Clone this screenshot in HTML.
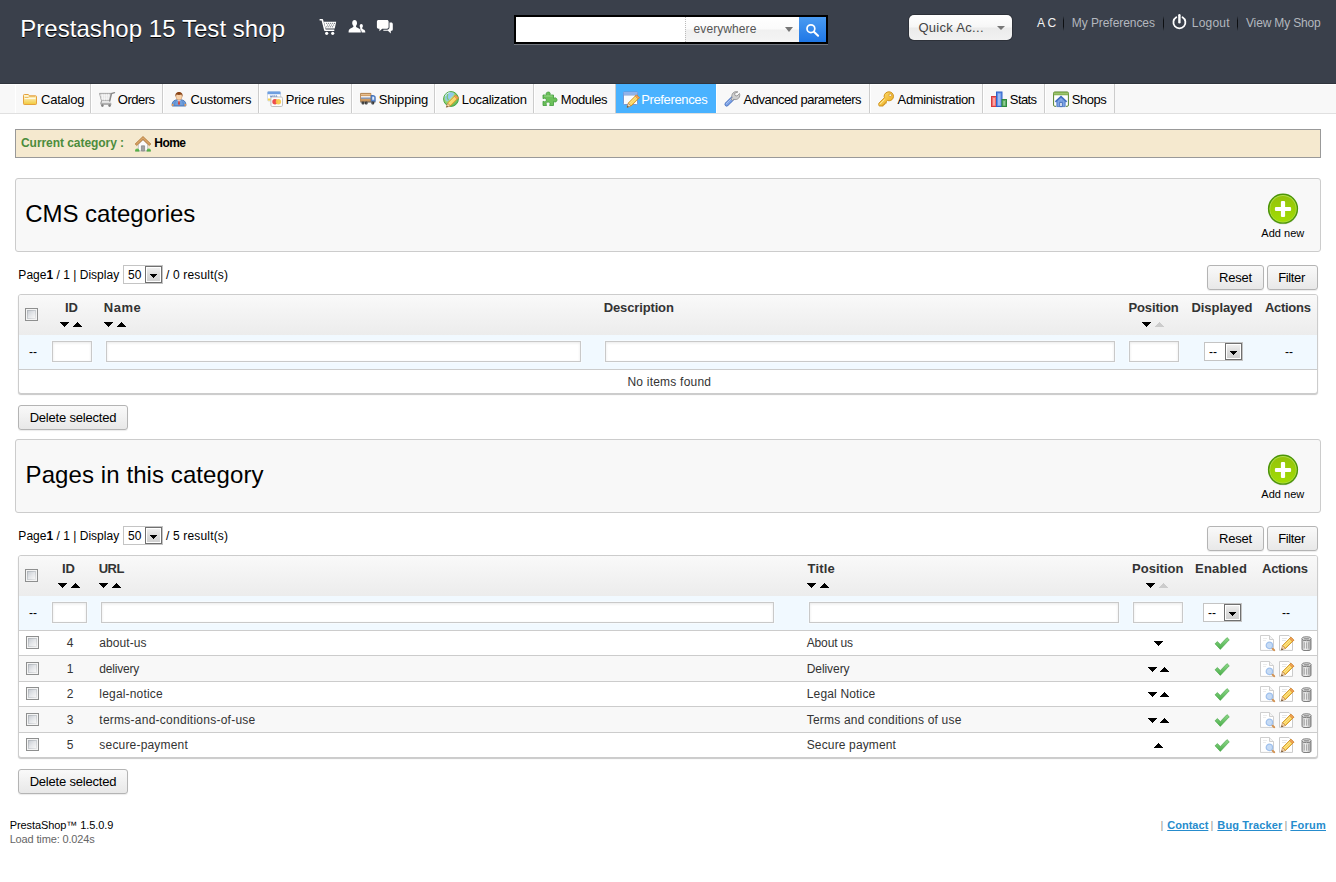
<!DOCTYPE html>
<html><head><meta charset="utf-8"><title>Preferences</title>
<style>
*{box-sizing:border-box;margin:0;padding:0}
html,body{width:1336px;height:882px;overflow:hidden;background:#fff}
body{font-family:"Liberation Sans",sans-serif;font-size:12px;color:#000;position:relative}
.abs{position:absolute}
#hdr{position:absolute;left:0;top:0;width:1336px;height:84px;background:#3a404b;border-bottom:1px solid #2f343c}
#shop{position:absolute;left:20px;top:15px;font-size:24px;line-height:28px;color:#fff;text-shadow:0 1px 0 #000;white-space:nowrap}
#nav{position:absolute;left:0;top:84px;width:1336px;height:30px;background:#f8f8f8;border-top:1px solid #fff;border-bottom:1px solid #e0e0e0}
#nav ul{position:absolute;left:15px;top:-1px;list-style:none;white-space:nowrap;height:29px;font-size:0}
#nav li{display:inline-block;vertical-align:top;height:29px;border-left:1px solid #fff;border-right:1px solid #ccc;padding:0 5px 0 7px;font-size:13px;line-height:29px;color:#000;position:relative}
#nav li svg{display:inline-block;vertical-align:top;margin:7px 2px 0 0;width:16px;height:16px;overflow:visible}
#nav li span{display:inline-block;vertical-align:top;height:29px;line-height:31px}
#nav li.act{background:#49b2ff;border-left-color:#49b2ff;border-right-color:#49b2ff;color:#fff}
.hl{position:absolute;top:16px;font-size:12px;line-height:14px;color:#b3b7be;white-space:nowrap}
.sep{position:absolute;top:16px;width:1px;height:15px;background:linear-gradient(rgba(0,0,0,0),#0d0f12 30%,#0d0f12 70%,rgba(0,0,0,0))}
#crumb{position:absolute;left:15px;top:129px;width:1306px;height:29px;background:#f5e9cf;border:1px solid #999}
#crumb b.g{position:absolute;left:5px;top:6px;font-size:12px;line-height:14px;color:#4c8c3c}
#crumb b.h{position:absolute;left:138px;top:6px;font-size:12px;line-height:14px;color:#000}
.tbox{position:absolute;left:15px;width:1306px;height:74px;background:#f8f8f8;border:1px solid #ccc;border-radius:3px}
.tbox h3{position:absolute;left:10px;top:21px;font-size:24px;line-height:28px;font-weight:normal;color:#000;white-space:nowrap}
.addc{position:absolute;left:1252px;top:15px;width:30px;height:30px}
.addt{position:absolute;left:1232px;top:48px;width:70px;text-align:center;font-size:11px;line-height:13px;color:#000}
.pag{position:absolute;left:18px;font-size:12px;line-height:14px;color:#000;white-space:nowrap}
.sel{position:absolute;height:19px;border:1px solid #c4c4c4;background:#fff;font-size:12px;line-height:19px;color:#000}
.sel i{position:absolute;right:0;top:0;width:17px;height:17px;border:1px solid #707070;background:linear-gradient(#f2f2f2,#dcdcdc 50%,#cfcfcf);box-shadow:inset 0 0 0 1px #fff}
.sel i:after{content:"";position:absolute;left:4px;top:7px;width:7px;height:4px;background:linear-gradient(#000,#000) 0 0/7px 1px no-repeat,linear-gradient(#000,#000) 1px 1px/5px 1px no-repeat,linear-gradient(#000,#000) 2px 2px/3px 1px no-repeat,linear-gradient(#000,#000) 3px 3px/1px 1px no-repeat}
.btn{position:absolute;height:25px;border:1px solid #b4b4b4;border-radius:3px;background:linear-gradient(#f9f9f9,#e8e8e8);font-size:13px;line-height:23px;text-align:center;color:#000;box-shadow:0 1px 1px rgba(0,0,0,.08)}
.tbl{position:absolute;left:18px;width:1300px;border:1px solid #ccc;border-radius:3px;background:#fff;box-shadow:0 1px 1px rgba(0,0,0,.22);overflow:hidden}
.th{position:absolute;left:0;top:0;width:1298px;height:40px;background:linear-gradient(#f9f9f9,#ececec)}
.fr{position:absolute;left:0;top:40px;width:1298px;height:35px;background:#f1f9ff;border-bottom:1px solid #ccc}
.h{position:absolute;top:5px;font-size:13px;line-height:15px;font-weight:bold;color:#333;white-space:nowrap}
.cb{position:absolute;width:13px;height:13px;border:1px solid #8e8f8f;background:#f4f4f4}
.cb:before{content:"";position:absolute;left:1px;top:1px;width:9px;height:9px;background:linear-gradient(135deg,#aeb3b9,#c9cdd1 50%,#e9e9ea)}
.cb:after{content:"";position:absolute;left:2px;top:2px;width:7px;height:7px;background:linear-gradient(135deg,#cbcfd5,#e4e6e9 50%,#f6f6f6)}
.in{position:absolute;height:21px;border:1px solid #c9c9c9;background:#fff;box-shadow:inset 0 1px 3px rgba(0,0,0,.09),0 0 0 1px rgba(255,255,255,.35)}
.dd{position:absolute;font-size:12px;line-height:14px;color:#000}
.ad{position:absolute;width:0;height:0;border-left:4.5px solid transparent;border-right:4.5px solid transparent;border-top:5px solid #000}
.au{position:absolute;width:0;height:0;border-left:4.5px solid transparent;border-right:4.5px solid transparent;border-bottom:5px solid #000}
.au.g{border-bottom-color:#ccc}
.row{position:absolute;left:0;width:1298px;border-bottom:1px solid #ccc;font-size:12px;color:#333}
.row.alt{background:#f8f8f8}
.row span{position:absolute;line-height:14px;white-space:nowrap}
.ft{position:absolute;font-size:11px;line-height:13px;white-space:nowrap}
</style></head>
<body>
<svg width="0" height="0" style="position:absolute"><defs>
<linearGradient id="gFold" x1="0" y1="0" x2="0" y2="1"><stop offset="0" stop-color="#fffbe0"/><stop offset="1" stop-color="#f2c93a"/></linearGradient>
<linearGradient id="gBlue" x1="0" y1="0" x2="0" y2="1"><stop offset="0" stop-color="#8db4ec"/><stop offset="1" stop-color="#3f73c4"/></linearGradient>
<linearGradient id="gAdd" x1="0" y1="0" x2="0" y2="1"><stop offset="0" stop-color="#94c30a"/><stop offset="1" stop-color="#a1dc04"/></linearGradient>
<linearGradient id="gChk" x1="0" y1="0" x2="0" y2="1"><stop offset="0" stop-color="#8fd98a"/><stop offset="1" stop-color="#4aae4a"/></linearGradient>
<linearGradient id="gPen" x1="0" y1="0" x2="1" y2="1"><stop offset="0" stop-color="#ffe88a"/><stop offset="1" stop-color="#f0b822"/></linearGradient>
<linearGradient id="gKey" x1="0" y1="0" x2="1" y2="1"><stop offset="0" stop-color="#ffe27a"/><stop offset="1" stop-color="#e9a511"/></linearGradient>
<linearGradient id="gBin" x1="0" y1="0" x2="1" y2="0"><stop offset="0" stop-color="#c4c4c4"/><stop offset=".45" stop-color="#f1f1f1"/><stop offset="1" stop-color="#a3a3a3"/></linearGradient>
<radialGradient id="gGlobe" cx=".35" cy=".3" r=".85"><stop offset="0" stop-color="#dcf5c6"/><stop offset=".55" stop-color="#8ed26e"/><stop offset="1" stop-color="#4aa84a"/></radialGradient>
<g id="aD" shape-rendering="crispEdges"><rect x="0" y="0" width="9" height="1"/><rect x="1" y="1" width="7" height="1"/><rect x="2" y="2" width="5" height="1"/><rect x="3" y="3" width="3" height="1"/><rect x="4" y="4" width="1" height="1"/></g>
<g id="aU" shape-rendering="crispEdges"><rect x="4" y="0" width="1" height="1"/><rect x="3" y="1" width="3" height="1"/><rect x="2" y="2" width="5" height="1"/><rect x="1" y="3" width="7" height="1"/><rect x="0" y="4" width="9" height="1"/></g>
<g id="iPen"><path d="M12.600.8l2.900 2.900-8.200 8.200-2.900-2.900z" fill="url(#gPen)" stroke="#c98a1a" stroke-width=".8"/><path d="M6.400 10.900l6.700-6.700M5.400 9.900l6.700-6.700" stroke="#fff6c4" stroke-width=".6" opacity=".8"/><path d="M4.400 9l2.900 2.900-4.100 1.400z" fill="#f6d9ae" stroke="#b9793a" stroke-width=".6"/><path d="M3.200 13.300l.6-1.700 1.200 1.200z" fill="#4a3a2a"/><path d="M12.600.8l2.900 2.900-1.200 1.200-2.900-2.900z" fill="#f3a15a" stroke="#c9762a" stroke-width=".5"/></g>
<g id="iChk"><path d="M1 7.8l2.4-2.3 2.9 3L13 1.6l2.3 2.2-9 9.6z" fill="url(#gChk)" stroke="#48a548" stroke-width=".6" stroke-linejoin="round"/></g>
<g id="iView"><path d="M.5.5h9l4 4v10.900H.5z" fill="#fff" stroke="#cfcfcf"/><path d="M9.500.5v4h4" fill="#f4f4f4" stroke="#cfcfcf"/><path d="M3 3.500h4M3 5.500h3" stroke="#ececec"/><circle cx="9.400" cy="10.400" r="3.200" fill="#c6dbf5" stroke="#9fc0ec" stroke-width="1.200"/><path d="M12.600 13.700l1.700 1.500" stroke="#d39455" stroke-width="1.900" stroke-linecap="round"/></g>
<g id="iEdit"><path d="M.5.5h9.5l3.5 3.5v11.4H.5z" fill="#fff" stroke="#cbcbcb"/><path d="M3 3.5h5M3 5.5h4" stroke="#e6e6e6"/><use href="#iPen" transform="translate(-1,1.4) scale(1.02)"/></g>
<g id="iBin"><path d="M1 3.200h9v9.500c0 1-.8 1.800-1.800 1.800H2.800c-1 0-1.800-.8-1.800-1.800z" fill="url(#gBin)" stroke="#737373" stroke-width=".9"/><ellipse cx="5.500" cy="2.700" rx="4.700" ry="2" fill="#e6e6e6" stroke="#737373" stroke-width=".9"/><ellipse cx="5.500" cy="2.800" rx="3" ry="1" fill="#9b9b9b"/><path d="M3.300 6.200v6.300M5.500 6.400v6.300M7.700 6.200v6.300" stroke="#9a9a9a" stroke-width=".8"/></g>
<g id="iAdd"><circle cx="16" cy="16.600" r="15" fill="#000" opacity=".10"/><circle cx="16" cy="15.700" r="15.100" fill="#4b9506"/><circle cx="16" cy="15.700" r="13.700" fill="#b2dd48"/><circle cx="16" cy="15.900" r="12.800" fill="url(#gAdd)"/><rect x="7.900" y="13.900" width="16.200" height="4.200" rx="1.100" fill="#fff"/><rect x="13.900" y="7.900" width="4.200" height="16.200" rx="1.100" fill="#fff"/></g>
</defs></svg>
<div id="hdr">
<div id="shop"><span id="t_shop" style="letter-spacing:0.049px;position:relative;left:0.21px">Prestashop 15 Test shop</span></div>
<svg class="abs" style="left:319px;top:18px" width="18" height="18" viewBox="0 0 18 18"><g fill="#fff"><path d="M.6 1.100h2.700c.4 0 .7.200.8.600l2.600 9.900h8.600v1.300H5.900c-.4 0-.7-.2-.8-.6L2.600 2.500H.6z"/><path d="M4.900 3.700h12.300l-1.500 6.900H6.700z"/><circle cx="7.700" cy="15.300" r="1.600"/><circle cx="13.700" cy="15.300" r="1.600"/></g><g fill="#3a404b"><circle cx="7.700" cy="5.300" r=".5"/><circle cx="9.700" cy="5.300" r=".5"/><circle cx="11.700" cy="5.300" r=".5"/><circle cx="13.700" cy="5.300" r=".5"/><circle cx="15.500" cy="5.300" r=".5"/><circle cx="8.700" cy="7" r=".5"/><circle cx="10.700" cy="7" r=".5"/><circle cx="12.700" cy="7" r=".5"/><circle cx="14.700" cy="7" r=".5"/><circle cx="7.900" cy="8.700" r=".5"/><circle cx="9.800" cy="8.700" r=".5"/><circle cx="11.700" cy="8.700" r=".5"/><circle cx="13.600" cy="8.700" r=".5"/></g></svg>
<svg class="abs" style="left:348px;top:19px" width="18" height="15" viewBox="0 0 18 15"><g fill="#fff"><path d="M6.600 1c1.400 0 2.400 1.200 2.400 2.900 0 1.200-.5 2.300-1.100 3 .1 1 .7 1.500 2 2 1.600.6 2.700 1.200 2.900 3.600v1H.6v-1c.2-2.400 1.300-3 2.900-3.600 1.300-.5 1.900-1 2-2C4.900 6.200 4.200 5.100 4.200 3.900 4.200 2.200 5.200 1 6.600 1z"/><path d="M13.300 5c.9 0 1.600.8 1.600 2 0 .8-.3 1.500-.8 2 .1.700.5 1 1.300 1.400 1.100.4 1.800.9 1.900 2.500v.6h-3.600c-.1-1.700-.6-2.800-1.800-3.600.3-.2.500-.5.500-.9-.4-.5-.7-1.200-.7-2 0-1.200.7-2 1.600-2z"/></g></svg>
<svg class="abs" style="left:376px;top:19px" width="18" height="16" viewBox="0 0 18 16"><g fill="#fff"><path d="M2.500 1h8.500c.9 0 1.600.7 1.600 1.600v5.500c0 .9-.7 1.600-1.600 1.600H6.200L3.400 12.200V9.700h-.9C1.600 9.700.9 9 .9 8.100V2.600C.9 1.700 1.600 1 2.500 1z"/><path d="M13.500 3.600h1.700c.9 0 1.600.7 1.600 1.600v5c0 .9-.7 1.600-1.600 1.600h-.4v2.600l-2.900-2.600H8.300c-.5 0-.9-.2-1.200-.6l.4-.4h3.800c1.200 0 2.200-1 2.200-2.200z"/></g></svg>
<div class="abs" style="left:514px;top:15px;width:314px;height:29px;background:#000;box-shadow:0 1px 0 rgba(255,255,255,.28)">
<div class="abs" style="left:2px;top:2px;width:169px;height:25px;background:#fff"></div>
<div class="abs" style="left:171px;top:2px;width:114px;height:25px;background:linear-gradient(#fff,#fbfbfb 48%,#f0f0f0 52%,#f4f4f4);border-left:1px dotted #bbb;font-size:12px;line-height:25px;color:#555;padding-left:7px"><span id="t_every" style="letter-spacing:0.090px;position:relative;left:0.54px">everywhere</span></div>
<div class="abs" style="left:271px;top:12px;width:0;height:0;border-left:4.500px solid transparent;border-right:4.500px solid transparent;border-top:5px solid #777"></div>
<div class="abs" style="left:285px;top:2px;width:27px;height:25px;background:linear-gradient(#4a9bf1,#1f77e6)"><svg class="abs" style="left:6px;top:5.500px" width="15" height="15" viewBox="0 0 15 15"><circle cx="5.900" cy="5.700" r="3.900" fill="none" stroke="#fff" stroke-width="1.700"/><path d="M8.900 8.700l4.200 4.100" stroke="#fff" stroke-width="2" stroke-linecap="round"/></svg></div>
</div>
<div class="abs" style="left:909px;top:15px;width:103px;height:25px;border:0;border-radius:5px;background:linear-gradient(#fff,#f6f6f6 49%,#ebebeb 51%,#f1f1f1);font-size:13px;line-height:25px;color:#444;padding-left:9px;box-shadow:0 0 0 1px #2d3139"><span id="t_quick" style="letter-spacing:0.297px;position:relative;left:0.45px">Quick Ac...</span></div>
<div class="abs" style="left:997px;top:26px;width:0;height:0;border-left:4.500px solid transparent;border-right:4.500px solid transparent;border-top:4.500px solid #777"></div>
<div class="hl" style="left:1036px;color:#f2f2f2"><span id="t_ac" style="position:relative;left:0.90px">A C</span></div>
<div class="sep" style="left:1063px"></div>
<div class="hl" style="left:1072px"><span id="t_myp" style="letter-spacing:-0.063px;position:relative;left:-0.27px">My Preferences</span></div>
<div class="sep" style="left:1163px"></div>
<svg class="abs" style="left:1171px;top:13px" width="17" height="18" viewBox="0 0 17 18"><path d="M5.300 4.200A6 6 0 1 0 11.500 4.200" fill="none" stroke="#fff" stroke-width="1.800" stroke-linecap="round"/><path d="M8.400 2.200v7" stroke="#fff" stroke-width="2.400" stroke-linecap="round"/></svg>
<div class="hl" style="left:1192px"><span id="t_logout" style="letter-spacing:0.234px;position:relative;left:-0.27px">Logout</span></div>
<div class="sep" style="left:1237px"></div>
<div class="hl" style="left:1246px"><span id="t_vms" style="letter-spacing:-0.164px">View My Shop</span></div>
</div>
<div id="nav"><ul><li style="width:76px"><svg viewBox="0 0 16 16"><path d="M.5 4.300c0-.5.300-.8.800-.8h3.700c.4 0 .7.200.9.500l.5.800h6.300c.5 0 .8.300.8.800v7.100c0 .5-.3.800-.8.800H1.300c-.5 0-.8-.3-.8-.8z" fill="url(#gFold)" stroke="#e5a13c"/><path d="M1.800 6.500h3.400l1.100-1.100h6" fill="none" stroke="#ecb65c" stroke-width=".9"/><path d="M1.500 7.600h11" stroke="#fffef6" stroke-width="1" opacity=".9"/></svg><span><span id="t_nav0" style="letter-spacing:-0.241px">Catalog</span></span></li><li style="width:72px"><svg viewBox="0 0 16 16"><g transform="translate(0,.6)"><path d="M.5 1.800h11.700l-1.600 7.300H2.500z" fill="#d4d4d4" stroke="#9b9b9b" stroke-width=".9"/><path d="M1.200 3.600h10.400M1.600 5.400h9.600M2 7.200h8.800M3.100 2.200l.8 6.600M5.200 2.200l.3 6.600M7.300 2.200v6.600M9.400 2.200l-.4 6.600" stroke="#fafafa" stroke-width=".8"/><path d="M10.700 9.400L12.500 2 15.500 1" fill="none" stroke="#8a8a8a" stroke-width="1.400" stroke-linecap="round"/><path d="M2.600 9.200l-.8 2.400h10.400" fill="none" stroke="#9a9a9a" stroke-width="1.100"/><path d="M1.600 12.700h10.800" stroke="#adadad" stroke-width="1.300"/><circle cx="3.400" cy="14" r="1.300" fill="#7f7f7f"/><circle cx="10.600" cy="14" r="1.300" fill="#7f7f7f"/></g></svg><span><span id="t_nav1" style="letter-spacing:-0.495px;position:relative;left:0.80px">Orders</span></span></li><li style="width:96px"><svg viewBox="0 0 16 16"><path d="M1.200 15c-.4-2.700.5-5.100 3.100-5.800l2.300-.6h2.800l2.300.6c2.600.7 3.500 3.100 3.100 5.800z" fill="#6f9fdc" stroke="#3c6bb0" stroke-width=".9"/><path d="M4.500 10.500c-.8 1.300-1 2.800-.8 4.200M11.500 10.500c.8 1.300 1 2.800.8 4.200" fill="none" stroke="#4a7cc4" stroke-width=".7"/><path d="M6.200 8.800L8 11.200l1.800-2.400z" fill="#fff"/><path d="M7.500 9.500h1l.6 3.300L8 14.200l-1.100-1.400z" fill="#dc4638"/><path d="M.8 13l1.500-.2.300 2-1.500.2zM15.200 13l-1.500-.2-.3 2 1.500.2z" fill="#ee9a4d"/><ellipse cx="8" cy="5.700" rx="3" ry="3.300" fill="#f7d2ab" stroke="#c98e5a" stroke-width=".5"/><path d="M4.400 6c-.6-3.300 1.300-5.100 3.600-5.100s4.200 1.800 3.600 5.100c-.3-1.400-.8-2.100-1.500-2.500-.9.500-3.300.5-4.200 0-.7.400-1.200 1.100-1.500 2.500z" fill="#8a4618"/></svg><span><span id="t_nav2" style="letter-spacing:-0.253px;position:relative;left:1.60px">Customers</span></span></li><li style="width:93px"><svg viewBox="0 0 16 16"><rect x=".5" y=".5" width="13" height="9.500" rx="1" fill="#fff" stroke="#c7d3e6" stroke-width=".8"/><path d="M.5 1.500c0-.6.400-1 1-1h11c.6 0 1 .4 1 1v1.700H.5z" fill="#6f9fe0"/><path d="M3 4.300h7v2.400H3z" fill="#dfe8f7"/><path d="M3.300 4.600l.8 1.800.8-1.800M5.800 4.600v1.800M7.700 4.700c-1.200-.3-1.200.7-.3.900s.7 1.100-.5.800M8.600 6.400l.8-1.800.8 1.800" fill="none" stroke="#3f6fc2" stroke-width=".7"/><path d="M.9 7.500h3v2.100h-3z" fill="#f6d34f"/><rect x="3.900" y="6" width="11.600" height="9.500" rx="1.300" fill="#fdfdfd" stroke="#b9b9b9" stroke-width=".9"/><circle cx="8" cy="10.800" r="2.700" fill="#ee4d4d"/><circle cx="11.400" cy="10.800" r="2.700" fill="#f7c948" opacity=".92"/></svg><span><span id="t_nav3" style="letter-spacing:-0.258px;position:relative;left:0.80px">Price rules</span></span></li><li style="width:83px"><svg viewBox="0 0 16 16"><path d="M.6 2.400h10.300v8.200H.6z" fill="#d3a068" stroke="#a87238" stroke-width=".8"/><path d="M1 3.500h9.500" stroke="#e8c394" stroke-width=".9"/><path d="M1 5.200h9.500v1.500H1z" fill="#fff"/><path d="M1 6.600h9.500v1H1z" fill="#5a90dc"/><path d="M1 9.200h9.500" stroke="#bf8a4e" stroke-width=".8"/><path d="M11.200 4.500h2.300c.9 0 1.700.8 1.700 1.700v4.400h-4z" fill="#5a8ad6" stroke="#2f5fa8" stroke-width=".8"/><path d="M12.300 5.800h1.200c.4 0 .7.300.7.700v2.300h-1.900z" fill="#e6effb"/><path d="M.4 10.600h15v.9H.4z" fill="#5f5f5f"/><circle cx="3" cy="11.900" r="1.500" fill="#2e2e2e"/><circle cx="6.200" cy="11.900" r="1.500" fill="#2e2e2e"/><circle cx="12.800" cy="11.900" r="1.500" fill="#2e2e2e"/><circle cx="3" cy="11.900" r=".5" fill="#aaa"/><circle cx="6.200" cy="11.900" r=".5" fill="#aaa"/><circle cx="12.800" cy="11.900" r=".5" fill="#aaa"/></svg><span><span id="t_nav4" style="letter-spacing:-0.162px;position:relative;left:0.80px">Shipping</span></span></li><li style="width:99px"><svg viewBox="0 0 16 16"><circle cx="8" cy="8" r="7.400" fill="url(#gGlobe)" stroke="#4aa646" stroke-width="1"/><path d="M3.600 2.600c2.200-1.700 5.600-1.800 7.600-.3-.3 2.100-1.900 2.900-3.200 4.100S6 9.800 3.800 10.200C1.700 8.600 1.500 4.600 3.600 2.600z" fill="#8cc6f2" opacity=".9"/><path d="M4.500 2.800c.5 1.500-.5 2.500-.2 4 .2 1.200 1.200 1.500 1.200 2.500" fill="none" stroke="#79c46a" stroke-width="1.300" opacity=".9"/><path d="M2.300 5.200c.9-2.100 2.500-3.200 4.200-3.600" fill="none" stroke="#f0fbe8" stroke-width="1" opacity=".8"/><g transform="translate(.2,3.300) scale(.98)"><use href="#iPen"/></g></svg><span><span id="t_nav5" style="letter-spacing:-0.317px;position:relative;left:0.80px">Localization</span></span></li><li style="width:82px"><svg viewBox="0 0 16 16"><path d="M5.600 1.200c1.300-.5 2.600.2 2.600 1.300 0 .6-.4 1-.4 1.500h3.700v3.300c.6 0 .9-.5 1.600-.5 1.100 0 1.900 1 1.900 2.100s-.8 2.100-1.900 2.100c-.7 0-1-.5-1.600-.5v4H7.600c0-.7.500-1 .5-1.700 0-1-.9-1.700-2-1.700s-2 .7-2 1.700c0 .7.500 1 .5 1.700H1V10.300c.6 0 1 .5 1.600.5 1 0 1.700-.8 1.700-1.800S3.600 7.200 2.600 7.200C2 7.200 1.600 7.700 1 7.700V4h3.600c0-.5-.4-.9-.4-1.500 0-.6.500-1.100 1.400-1.300z" fill="#6cc05a" stroke="#3f9a3a" stroke-width=".8"/><path d="M2 5h8.500" stroke="#a8e09a" stroke-width=".8"/></svg><span><span id="t_nav6" style="letter-spacing:-0.415px;position:relative;left:0.80px">Modules</span></span></li><li class="act" style="width:100px"><svg viewBox="0 0 16 16"><g transform="translate(-1,0)"><rect x=".5" y="1" width="14" height="12.500" rx=".8" fill="#fff" stroke="#6f8fcb" stroke-width=".9"/><path d="M.5 1.800c0-.5.300-.8.800-.8h12.400c.5 0 .8.300.8.800v2H.5z" fill="#7ea6e6"/><path d="M1 2h13" stroke="#a9c6f2" stroke-width=".8"/><path d="M1 4.200h13" stroke="#5f86c9" stroke-width=".6"/><path d="M1.500 5h12v7.800h-12z" fill="#fafbfe"/><g transform="translate(.8,3.100)"><use href="#iPen"/></g></g></svg><span><span id="t_nav7" style="letter-spacing:-0.355px;position:relative;left:-0.80px">Preferences</span></span></li><li style="width:154px"><svg viewBox="0 0 16 16"><path d="M2.700 13.300L8.800 7.200" stroke="#4b74c2" stroke-width="4.400" stroke-linecap="round"/><path d="M2.700 13.300L8.800 7.200" stroke="#7fa4e6" stroke-width="2.800" stroke-linecap="round"/><path d="M2.400 12.600L7.600 7.400" stroke="#b9cdf3" stroke-width=".8" stroke-linecap="round"/><path d="M13.900.9c-1.600-.6-3.500-.3-4.800 1-1.300 1.300-1.600 3.200-1 4.800L6.900 7.900l1.600 1.600 1.200-1.200c1.600.6 3.500.3 4.800-1 1.300-1.300 1.600-3.200 1-4.800L13 5l-2-.5-.5-2z" fill="#cfcfcf" stroke="#8b8b8b" stroke-width=".8" stroke-linejoin="round"/></svg><span><span id="t_nav8" style="letter-spacing:-0.510px;position:relative;left:1.60px">Advanced parameters</span></span></li><li style="width:113px"><svg viewBox="0 0 16 16"><path d="M11 .8c2.500 0 4.500 2 4.500 4.500S13.500 9.800 11 9.800c-.6 0-1.100-.1-1.600-.3L8.200 10.700v1.500H6.700v1.400H5.200V15H1.600c-.5 0-.8-.3-.8-.8v-1.900l5.600-5.600c-.2-.5-.3-.9-.3-1.400 0-2.500 2.300-4.500 4.900-4.500z" fill="url(#gKey)" stroke="#c98a14" stroke-width=".9"/><circle cx="12.200" cy="4.200" r="1.300" fill="#fff" stroke="#c98a14" stroke-width=".7"/><path d="M1.800 13.300l5-5" stroke="#fff3b8" stroke-width=".8"/></svg><span><span id="t_nav9" style="letter-spacing:-0.382px;position:relative;left:1.60px">Administration</span></span></li><li style="width:62px"><svg viewBox="0 0 16 16"><rect x=".5" y="5.500" width="5" height="10" fill="#f06a6a" stroke="#d63c3c"/><rect x="2" y="7" width="2" height="7.500" fill="#f9a3a3"/><rect x="5.500" y="1" width="5.500" height="14.500" fill="#5e8fe6" stroke="#2f63c9"/><rect x="7" y="2.500" width="2.500" height="12" fill="#9bbaf2"/><rect x="11" y="8.500" width="4.500" height="7" fill="#5aa862" stroke="#2f8a3c"/><rect x="12.300" y="10" width="1.800" height="4.500" fill="#8fce95"/></svg><span><span id="t_nav10" style="letter-spacing:-0.587px;position:relative;left:0.80px">Stats</span></span></li><li style="width:70px"><svg viewBox="0 0 16 16"><rect x=".6" y="1" width="14.800" height="14.300" rx="1.200" fill="#fff" stroke="#55802e" stroke-width="1"/><path d="M.6 2.200c0-.7.500-1.200 1.200-1.200h12.400c.7 0 1.200.5 1.200 1.200v2.100H.6z" fill="#7fae4c"/><path d="M1.500 2.700h13" stroke="#cfe6b0" stroke-width="1.100" stroke-dasharray="1 1"/><path d="M3 5v10.800h10V5z" fill="#fff"/><path d="M1.800 10.200L8 4.500l6.200 5.700-1.200 1.200L8 6.800l-5 4.600z" fill="#3f6dc0"/><path d="M3.800 10.400L8 6.700l4.200 3.700v5.200H3.800z" fill="#86aae8" stroke="#3f6dc0" stroke-width=".7"/><path d="M4.300 9.900h7.400M4.300 11.300h7.400M4.300 12.700h7.400M4.300 14.100h7.400" stroke="#4a78c8" stroke-width=".6" stroke-dasharray=".8 .8"/><path d="M6.800 11.400h2.400v4.200H6.800z" fill="#fff" stroke="#2f5db0" stroke-width=".8"/></svg><span><span id="t_nav11" style="letter-spacing:-0.450px;position:relative;left:0.80px">Shops</span></span></li></ul></div>
<div id="crumb"><b class="g"><span id="t_cur" style="letter-spacing:-0.053px">Current category :</span></b><svg class="abs" style="left:119px;top:6px" width="16" height="16" viewBox="0 0 16 16"><path d="M3.400 8.200L8 3.800l4.600 4.400v6.700H3.400z" fill="#fbfbfb" stroke="#bcbcbc" stroke-width=".8"/><path d="M6.400 9.800h3.200v5.200H6.400z" fill="#a2a2a2" stroke="#828282" stroke-width=".7"/><path d="M8 .4l7.900 7.500-1.600 1.700L8 3.600 1.700 9.600.1 7.900z" fill="#c98d4c" stroke="#aa7130" stroke-width=".6"/><path d="M1.300 8.200L8 1.800l6.700 6.400" fill="none" stroke="#e0b27a" stroke-width=".9"/><path d="M.2 15.200c-.3-1.700.7-2.700 2-2.700s2.100.9 2.100 1.800v.9zM15.800 15.200c.3-1.700-.7-2.700-2-2.700s-2.100.9-2.100 1.800v.9z" fill="#63b953"/><path d="M.2 15h4.100M11.700 15h4.100" stroke="#3f9837" stroke-width=".8"/></svg><b class="h"><span id="t_home" style="letter-spacing:-0.570px;position:relative;left:0.36px">Home</span></b></div>
<div class="tbox" style="top:178px"><h3><span id="t_h1" style="letter-spacing:-0.060px;position:relative;left:-0.69px">CMS categories</span></h3><div class="addc"><svg class="abs" style="left:-1px;top:-1px" width="32" height="33" viewBox="0 0 32 33"><use href="#iAdd"/></svg></div><div class="addt"><span id="t_add1" style="letter-spacing:0.030px;position:relative;left:-0.18px">Add new</span></div></div>
<div class="pag" style="top:268px"><span id="t_pg0" style="letter-spacing:0.015px;position:relative;left:0.36px">Page<b>1</b> / 1 | Display</span></div>
<div class="pag" style="top:268px;left:165px"><span id="t_rs0" style="letter-spacing:0.153px;position:relative;left:1.08px">/ 0 result(s)</span></div>
<div class="sel" style="left:123px;top:265px;width:40px;padding-left:4px">50<i></i></div>
<div class="btn" style="left:1207px;top:265px;width:57px"><span id="t_reset0" style="letter-spacing:-0.225px">Reset</span></div>
<div class="btn" style="left:1267px;top:265px;width:51px"><span id="t_filter0" style="letter-spacing:-0.360px;position:relative;left:-0.90px">Filter</span></div>
<div class="tbl" style="top:294px;height:100px">
<div class="th"></div><div class="fr"></div>
<div class="cb" style="left:6px;top:13px"></div><div class="h" style="left:46px"><span id="t_th1_id">ID</span></div><svg class="abs" style="left:41px;top:27px" width="9" height="5" fill="#000"><use href="#aD"/></svg><svg class="abs" style="left:54px;top:27px" width="9" height="5" fill="#000"><use href="#aU"/></svg><div class="h" style="left:85px"><span id="t_th1_name" style="letter-spacing:0.600px;position:relative;left:-0.36px">Name</span></div><svg class="abs" style="left:85px;top:27px" width="9" height="5" fill="#000"><use href="#aD"/></svg><svg class="abs" style="left:98px;top:27px" width="9" height="5" fill="#000"><use href="#aU"/></svg><div class="h" style="left:584px"><span id="t_th1_description" style="letter-spacing:-0.135px;position:relative;left:0.69px">Description</span></div><div class="h" style="left:1109px"><span id="t_th1_position" style="letter-spacing:-0.129px;position:relative;left:0.45px">Position</span></div><svg class="abs" style="left:1123px;top:27px" width="9" height="5" fill="#000"><use href="#aD"/></svg><svg class="abs" style="left:1136px;top:27px" width="9" height="5" fill="#ccc"><use href="#aU"/></svg><div class="h" style="left:1172px"><span id="t_th1_displayed" style="letter-spacing:-0.056px;position:relative;left:0.45px">Displayed</span></div><div class="h" style="left:1246px"><span id="t_th1_actions" style="letter-spacing:-0.300px">Actions</span></div>
<div class="dd" style="left:10px;top:50px">--</div><div class="in" style="left:33px;top:46px;width:40px"></div><div class="in" style="left:87px;top:46px;width:475px"></div><div class="in" style="left:586px;top:46px;width:510px"></div><div class="in" style="left:1110px;top:46px;width:50px"></div><div class="sel" style="left:1185px;top:47px;width:39px;padding-left:4px">--<i></i></div><div class="dd" style="left:1266px;top:50px">--</div>
<div class="dd" style="left:0;top:80px;width:1298px;text-align:center;color:#333"><span id="t_noitems" style="letter-spacing:0.223px;position:relative;left:1.35px">No items found</span></div>
</div>
<div class="btn" style="left:18px;top:405px;width:110px"><span id="t_del1" style="letter-spacing:-0.193px">Delete selected</span></div>
<div class="tbox" style="top:439px"><h3><span id="t_h2" style="letter-spacing:0.086px;position:relative;left:-0.45px">Pages in this category</span></h3><div class="addc"><svg class="abs" style="left:-1px;top:-1px" width="32" height="33" viewBox="0 0 32 33"><use href="#iAdd"/></svg></div><div class="addt"><span id="t_add2" style="letter-spacing:0.030px;position:relative;left:-0.18px">Add new</span></div></div>
<div class="pag" style="top:529px"><span id="t_pg5" style="letter-spacing:0.015px;position:relative;left:0.36px">Page<b>1</b> / 1 | Display</span></div>
<div class="pag" style="top:529px;left:165px"><span id="t_rs5" style="letter-spacing:0.153px;position:relative;left:1.08px">/ 5 result(s)</span></div>
<div class="sel" style="left:123px;top:526px;width:40px;padding-left:4px">50<i></i></div>
<div class="btn" style="left:1207px;top:526px;width:57px"><span id="t_reset5" style="letter-spacing:-0.225px">Reset</span></div>
<div class="btn" style="left:1267px;top:526px;width:51px"><span id="t_filter5" style="letter-spacing:-0.360px;position:relative;left:-0.90px">Filter</span></div>
<div class="tbl" style="top:555px;height:203px">
<div class="th"></div><div class="fr"></div>
<div class="cb" style="left:6px;top:13px"></div><div class="h" style="left:43px"><span id="t_th2_id">ID</span></div><svg class="abs" style="left:39px;top:27px" width="9" height="5" fill="#000"><use href="#aD"/></svg><svg class="abs" style="left:52px;top:27px" width="9" height="5" fill="#000"><use href="#aU"/></svg><div class="h" style="left:80px"><span id="t_th2_url" style="letter-spacing:-0.495px;position:relative;left:-0.36px">URL</span></div><svg class="abs" style="left:80px;top:27px" width="9" height="5" fill="#000"><use href="#aD"/></svg><svg class="abs" style="left:93px;top:27px" width="9" height="5" fill="#000"><use href="#aU"/></svg><div class="h" style="left:788px"><span id="t_th2_title" style="letter-spacing:0.180px;position:relative;left:0.54px">Title</span></div><svg class="abs" style="left:788px;top:27px" width="9" height="5" fill="#000"><use href="#aD"/></svg><svg class="abs" style="left:801px;top:27px" width="9" height="5" fill="#000"><use href="#aU"/></svg><div class="h" style="left:1113px"><span id="t_th2_position" style="letter-spacing:0.024px">Position</span></div><svg class="abs" style="left:1127px;top:27px" width="9" height="5" fill="#000"><use href="#aD"/></svg><svg class="abs" style="left:1140px;top:27px" width="9" height="5" fill="#ccc"><use href="#aU"/></svg><div class="h" style="left:1176px"><span id="t_th2_enabled" style="letter-spacing:0.210px">Enabled</span></div><div class="h" style="left:1243px"><span id="t_th2_actions" style="letter-spacing:-0.315px;position:relative;left:0.09px">Actions</span></div>
<div class="dd" style="left:10px;top:50px">--</div><div class="in" style="left:33px;top:46px;width:35px"></div><div class="in" style="left:82px;top:46px;width:673px"></div><div class="in" style="left:790px;top:46px;width:310px"></div><div class="in" style="left:1114px;top:46px;width:50px"></div><div class="sel" style="left:1184px;top:47px;width:39px;padding-left:4px">--<i></i></div><div class="dd" style="left:1263px;top:50px">--</div>
<div class="row" style="top:75px;height:25px"><div class="cb" style="left:7px;top:5px"></div><span style="left:41px;top:5px;width:20px;text-align:center">4</span><span style="left:80px;top:5px"><span id="t_u0" style="letter-spacing:0.075px;position:relative;left:0.36px">about-us</span></span><span style="left:788px;top:5px"><span id="t_t0" style="letter-spacing:-0.142px;position:relative;left:-0.30px">About us</span></span><svg class="abs" style="left:1135px;top:10px" width="9" height="5" fill="#000"><use href="#aD"/></svg><svg class="abs" style="left:1195px;top:5px" width="16" height="14" viewBox="0 0 16 14"><use href="#iChk"/></svg><svg class="abs" style="left:1241px;top:4px" width="17" height="17" viewBox="0 0 17 17"><use href="#iView"/></svg><svg class="abs" style="left:1260px;top:4px" width="17" height="17" viewBox="0 0 17 17"><use href="#iEdit"/></svg><svg class="abs" style="left:1282px;top:5px" width="11" height="15" viewBox="0 0 11 15"><use href="#iBin"/></svg></div>
<div class="row alt" style="top:100px;height:26px"><div class="cb" style="left:7px;top:6px"></div><span style="left:41px;top:6px;width:20px;text-align:center">1</span><span style="left:80px;top:6px"><span id="t_u1" style="letter-spacing:-0.193px;position:relative;left:0.36px">delivery</span></span><span style="left:788px;top:6px"><span id="t_t1" style="letter-spacing:-0.065px;position:relative;left:-0.30px">Delivery</span></span><svg class="abs" style="left:1129px;top:11px" width="9" height="5" fill="#000"><use href="#aD"/></svg><svg class="abs" style="left:1141px;top:11px" width="9" height="5" fill="#000"><use href="#aU"/></svg><svg class="abs" style="left:1195px;top:6px" width="16" height="14" viewBox="0 0 16 14"><use href="#iChk"/></svg><svg class="abs" style="left:1241px;top:5px" width="17" height="17" viewBox="0 0 17 17"><use href="#iView"/></svg><svg class="abs" style="left:1260px;top:5px" width="17" height="17" viewBox="0 0 17 17"><use href="#iEdit"/></svg><svg class="abs" style="left:1282px;top:6px" width="11" height="15" viewBox="0 0 11 15"><use href="#iBin"/></svg></div>
<div class="row" style="top:126px;height:25px"><div class="cb" style="left:7px;top:5px"></div><span style="left:41px;top:5px;width:20px;text-align:center">2</span><span style="left:80px;top:5px"><span id="t_u2" style="letter-spacing:0.173px;position:relative;left:0.36px">legal-notice</span></span><span style="left:788px;top:5px"><span id="t_t2" style="letter-spacing:0.164px;position:relative;left:-0.30px">Legal Notice</span></span><svg class="abs" style="left:1129px;top:10px" width="9" height="5" fill="#000"><use href="#aD"/></svg><svg class="abs" style="left:1141px;top:10px" width="9" height="5" fill="#000"><use href="#aU"/></svg><svg class="abs" style="left:1195px;top:5px" width="16" height="14" viewBox="0 0 16 14"><use href="#iChk"/></svg><svg class="abs" style="left:1241px;top:4px" width="17" height="17" viewBox="0 0 17 17"><use href="#iView"/></svg><svg class="abs" style="left:1260px;top:4px" width="17" height="17" viewBox="0 0 17 17"><use href="#iEdit"/></svg><svg class="abs" style="left:1282px;top:5px" width="11" height="15" viewBox="0 0 11 15"><use href="#iBin"/></svg></div>
<div class="row alt" style="top:151px;height:26px"><div class="cb" style="left:7px;top:6px"></div><span style="left:41px;top:6px;width:20px;text-align:center">3</span><span style="left:80px;top:6px"><span id="t_u3" style="letter-spacing:0.249px;position:relative;left:0.36px">terms-and-conditions-of-use</span></span><span style="left:788px;top:6px"><span id="t_t3" style="letter-spacing:0.202px;position:relative;left:-0.30px">Terms and conditions of use</span></span><svg class="abs" style="left:1129px;top:11px" width="9" height="5" fill="#000"><use href="#aD"/></svg><svg class="abs" style="left:1141px;top:11px" width="9" height="5" fill="#000"><use href="#aU"/></svg><svg class="abs" style="left:1195px;top:6px" width="16" height="14" viewBox="0 0 16 14"><use href="#iChk"/></svg><svg class="abs" style="left:1241px;top:5px" width="17" height="17" viewBox="0 0 17 17"><use href="#iView"/></svg><svg class="abs" style="left:1260px;top:5px" width="17" height="17" viewBox="0 0 17 17"><use href="#iEdit"/></svg><svg class="abs" style="left:1282px;top:6px" width="11" height="15" viewBox="0 0 11 15"><use href="#iBin"/></svg></div>
<div class="row" style="top:177px;height:25px"><div class="cb" style="left:7px;top:5px"></div><span style="left:41px;top:5px;width:20px;text-align:center">5</span><span style="left:80px;top:5px"><span id="t_u4" style="letter-spacing:0.180px;position:relative;left:0.36px">secure-payment</span></span><span style="left:788px;top:5px"><span id="t_t4" style="letter-spacing:0.144px;position:relative;left:-0.30px">Secure payment</span></span><svg class="abs" style="left:1135px;top:10px" width="9" height="5" fill="#000"><use href="#aU"/></svg><svg class="abs" style="left:1195px;top:5px" width="16" height="14" viewBox="0 0 16 14"><use href="#iChk"/></svg><svg class="abs" style="left:1241px;top:4px" width="17" height="17" viewBox="0 0 17 17"><use href="#iView"/></svg><svg class="abs" style="left:1260px;top:4px" width="17" height="17" viewBox="0 0 17 17"><use href="#iEdit"/></svg><svg class="abs" style="left:1282px;top:5px" width="11" height="15" viewBox="0 0 11 15"><use href="#iBin"/></svg></div>
</div>
<div class="btn" style="left:18px;top:769px;width:110px"><span id="t_del2" style="letter-spacing:-0.193px">Delete selected</span></div>
<div class="ft" style="left:10px;top:819px;color:#000"><span id="t_ver" style="letter-spacing:-0.080px;position:relative;left:-0.36px">PrestaShop&trade; 1.5.0.9</span></div>
<div class="ft" style="left:10px;top:833px;color:#666"><span id="t_load" style="letter-spacing:-0.147px;position:relative;left:-0.36px">Load time: 0.024s</span></div>
<div class="ft" style="right:10px;top:819px;color:#999;font-weight:bold"><span style="font-weight:normal">|</span> <u style="color:#268ccd"><span id="t_contact" style="letter-spacing:0.030px;position:relative;left:0.90px">Contact</span></u> <span style="font-weight:normal">|</span> <u style="color:#268ccd"><span id="t_bug" style="letter-spacing:0.126px;position:relative;left:0.90px">Bug Tracker</span></u> <span style="font-weight:normal">|</span> <u style="color:#268ccd"><span id="t_forum" style="letter-spacing:0.270px">Forum</span></u></div>
</body></html>
